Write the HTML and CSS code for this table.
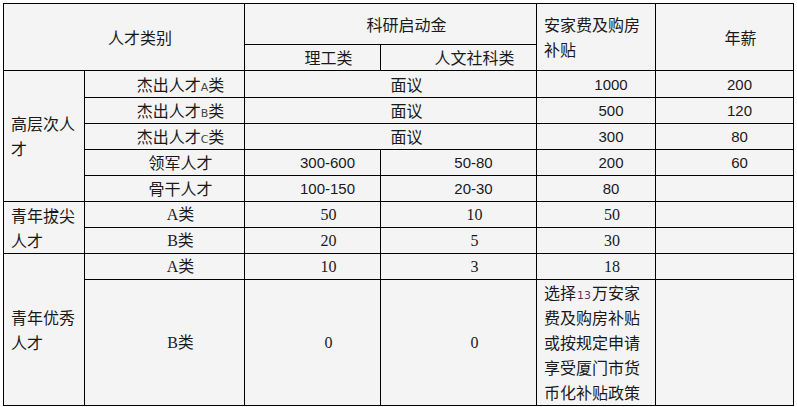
FILE: index.html
```html
<!DOCTYPE html>
<html lang="zh-CN">
<head>
<meta charset="utf-8">
<title>人才类别</title>
<link rel="stylesheet" href="styles.css">
</head>
<body>
<div class="wrap">
<table class="t">
<colgroup><col class="c1"><col class="c2"><col class="c3"><col class="c4"><col class="c5"><col class="c6"></colgroup>
<tr class="r1"><td colspan="2" rowspan="2">人才类别</td><td colspan="2">科研启动金</td><td rowspan="2" class="left">安家费及购房补贴</td><td rowspan="2">年薪</td></tr>
<tr class="r2"><td>理工类</td><td>人文社科类</td></tr>
<tr class="r3"><td rowspan="5" class="left">高层次人才</td><td>杰出人才<span class="lt">A</span>类</td><td colspan="2">面议</td><td class="num">1000</td><td class="num">200</td></tr>
<tr class="r4"><td>杰出人才<span class="lt">B</span>类</td><td colspan="2">面议</td><td class="num">500</td><td class="num">120</td></tr>
<tr class="r5"><td>杰出人才<span class="lt">C</span>类</td><td colspan="2">面议</td><td class="num">300</td><td class="num">80</td></tr>
<tr class="r5"><td>领军人才</td><td class="num">300-600</td><td class="num">50-80</td><td class="num">200</td><td class="num">60</td></tr>
<tr class="r5"><td>骨干人才</td><td class="num">100-150</td><td class="num">20-30</td><td class="num">80</td><td></td></tr>
<tr class="r5 ser"><td rowspan="2" class="left cjk">青年拔尖人才</td><td>A类</td><td>50</td><td>10</td><td>50</td><td></td></tr>
<tr class="r5 ser"><td>B类</td><td>20</td><td>5</td><td>30</td><td></td></tr>
<tr class="r5 ser"><td rowspan="2" class="left cjk">青年优秀人才</td><td>A类</td><td>10</td><td>3</td><td>18</td><td></td></tr>
<tr class="r11 ser"><td>B类</td><td>0</td><td>0</td><td class="left cjk">选择<span class="lt pur">13</span>万安家费及购房补贴或按规定申请享受厦门市货币化补贴政策</td><td></td></tr>
</table>
</div>
</body>
</html>
```
FILE: styles.css
```css
body {
  margin: 0;
  background: #fff;
}
.wrap {
  padding: 3px 0 0 3px;
}
.t {
  border-collapse: collapse;
  table-layout: fixed;
  width: 791px;
  background: #f4f4f4;
  font: 16px/25px "Noto Sans CJK SC", sans-serif;
  color: #1a1a1a;
}
.c1 { width: 81px; }
.c2 { width: 160px; }
.c3 { width: 136px; }
.c4 { width: 156px; }
.c5 { width: 119px; }
.c6 { width: 138px; }
.r1 { height: 41px; }
.r2 { height: 26px; }
.r3 { height: 27px; }
.r4 { height: 25px; }
.r5 { height: 26px; }
.r11 { height: 126px; }
.t td {
  border: 1px solid #000;
  padding: 0 7px;
  text-align: center;
  text-indent: 2em;
  vertical-align: middle;
}
.t td.left {
  text-align: left;
  text-indent: 0;
}
.t td.num {
  font-family: "Liberation Sans", sans-serif;
  font-size: 15px;
  text-indent: 30px;
}
.ser td {
  font-family: "Liberation Serif", "Noto Sans CJK SC", serif;
}
.ser td.cjk {
  font-family: "Noto Sans CJK SC", sans-serif;
}
.lt {
  font-family: "DejaVu Sans", sans-serif;
  font-size: 11px;
  line-height: 1;
  color: #444;
}
.pur {
  margin: 0 1px;
  color: #5a3a5a;
}
```
